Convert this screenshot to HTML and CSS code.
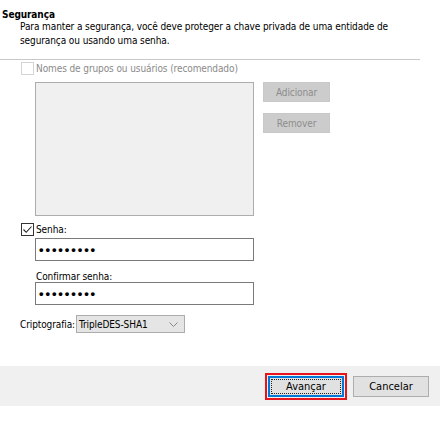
FILE: index.html
```html
<!DOCTYPE html>
<html lang="pt">
<head>
<meta charset="utf-8">
<link rel="stylesheet" href="styles.css">
</head>
<body>
<div class="dialog">
  <div class="title">Segurança</div>
  <p class="desc">Para manter a segurança, você deve proteger a chave privada de uma entidade de segurança ou usando uma senha.</p>
  <div class="sep"></div>
  <label class="check disabled"><span class="box"></span><span>Nomes de grupos ou usuários (recomendado)</span></label>
  <div class="users">
    <div class="listbox"></div>
    <div class="side-buttons">
      <button class="btn-disabled">Adicionar</button>
      <button class="btn-disabled">Remover</button>
    </div>
  </div>
  <label class="check senha"><span class="box"><svg width="11" height="11" viewBox="0 0 11 11"><path d="M1.5 5.5 L4.2 8.3 L9.5 2.5" fill="none" stroke="#222" stroke-width="1.1"/></svg></span><span>Senha:</span></label>
  <div class="field"><span class="dots">•••••••••</span></div>
  <div class="field-label">Confirmar senha:</div>
  <div class="field second"><span class="dots">•••••••••</span></div>
  <div class="crypto">
    <span>Criptografia:</span>
    <div class="select"><span>TripleDES-SHA1</span><svg width="9" height="5" viewBox="0 0 9 5"><path d="M0.5 0.5 L4.5 4.5 L8.5 0.5" fill="none" stroke="#888" stroke-width="1"/></svg></div>
  </div>
  <div class="footer">
    <div class="focus-ring"><button class="btn primary">Avançar</button></div>
    <button class="btn">Cancelar</button>
  </div>
</div>
</body>
</html>
```
FILE: styles.css
```css
* { box-sizing: border-box; }
html, body { margin: 0; padding: 0; background: #fff; }
body {
  font-family: "DejaVu Sans Condensed", "DejaVu Sans", sans-serif;
  font-stretch: condensed;
  font-size: 10px;
  letter-spacing: -0.1px;
  color: #000;
}
.dialog { width: 443px; height: 431px; overflow: hidden; }
.title {
  font-weight: bold;
  padding: 8px 0 0 2px;
  line-height: 13px;
}
.desc {
  margin: -1px 0 0 20px;
  width: 380px;
  line-height: 14px;
}
.sep {
  width: 420px;
  height: 1px;
  background: #c8c8c8;
  margin-top: 11px;
}
.check {
  display: flex;
  align-items: center;
  margin-left: 21px;
  height: 13px;
  line-height: 13px;
}
.check .box {
  width: 13px;
  height: 13px;
  border: 1px solid #333;
  background: #fff;
  margin-right: 2px;
  display: flex;
  align-items: center;
  justify-content: center;
}
.check.disabled { margin-top: 2px; color: #8a8a8a; }
.check.disabled .box { border-color: #d4d4d4; }
.users {
  display: flex;
  margin-top: 7px;
  margin-left: 35px;
}
.listbox {
  width: 219px;
  height: 134px;
  background: #f0f0f0;
  border: 1px solid #adadad;
}
.side-buttons {
  display: flex;
  flex-direction: column;
  gap: 11px;
  margin-left: 9px;
}
.btn-disabled {
  width: 67px;
  height: 20px;
  border: 1px solid #c8c8c8;
  background: #cccccc;
  color: #8d8d8d;
  font: inherit;
  letter-spacing: inherit;
  padding: 0;
}
.senha { margin-top: 7px; }
.field {
  margin-left: 35px;
  margin-top: 2px;
  width: 219px;
  height: 23px;
  border: 1px solid #7a7a7a;
  display: flex;
  align-items: center;
  padding-left: 3px;
}
.field.second { margin-top: 0; }
.dots {
  font-family: "Liberation Sans", Arial, sans-serif;
  font-size: 13px;
  font-weight: bold;
  letter-spacing: 1.9px;
  line-height: 1;
}
.field-label {
  margin-left: 36px;
  margin-top: 10px;
  line-height: 11px;
  height: 11px;
}
.crypto {
  display: flex;
  align-items: center;
  margin-left: 20px;
  margin-top: 10px;
}
.select {
  margin-left: 1px;
  width: 109px;
  height: 18px;
  background: #e5e5e5;
  border: 1px solid #acacac;
  display: flex;
  align-items: center;
  justify-content: space-between;
  padding: 0 6px 0 2px;
}
.footer {
  width: 440px;
  height: 40px;
  background: #f0f0f0;
  margin-top: 33px;
  display: flex;
  align-items: center;
  justify-content: flex-end;
  padding-right: 11px;
  gap: 6px;
}
.focus-ring {
  border: 2px solid #e8141c;
  padding: 1px;
  display: flex;
}
.btn {
  width: 76px;
  height: 21px;
  border: 1px solid #adadad;
  background: #e1e1e1;
  font: inherit;
  font-size: 11px;
  letter-spacing: 0;
  color: #000;
  padding: 0;
}
.btn.primary {
  border: 2px solid #0078d7;
  outline: 1px dotted #222;
  outline-offset: -4px;
}
```
